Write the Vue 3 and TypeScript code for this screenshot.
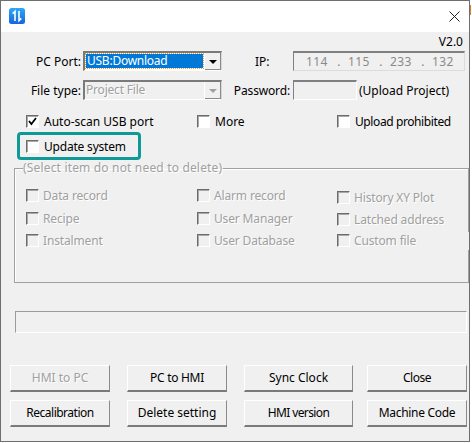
<script setup lang="ts">
const groupRows: { label: string }[][] = [
  [{ label: 'Data record' }, { label: 'Alarm record' }, { label: 'History XY Plot' }],
  [{ label: 'Recipe' }, { label: 'User Manager' }, { label: 'Latched address' }],
  [{ label: 'Instalment' }, { label: 'User Database' }, { label: 'Custom file' }],
]
const row1 = [
  { label: 'HMI to PC', disabled: true },
  { label: 'PC to HMI', disabled: false },
  { label: 'Sync Clock', disabled: false },
  { label: 'Close', disabled: false },
]
const row2 = ['Recalibration', 'Delete setting', 'HMI version', 'Machine Code']
const ipParts = ['114', '115', '233', '132']
</script>

<template>
  <div class="page">
    <div class="window">
      <header class="titlebar">
        <svg class="appicon" width="16" height="16" viewBox="0 0 16 16">
          <defs>
            <linearGradient id="g" x1="0" y1="0" x2="0" y2="1">
              <stop offset="0" stop-color="#2ea8f5" />
              <stop offset="1" stop-color="#1565e0" />
            </linearGradient>
          </defs>
          <rect width="16" height="16" rx="2.5" fill="url(#g)" />
          <path d="M6 13V3.4L3.7 5.6M10 3v9.6l2.3-2.2" fill="none" stroke="#fff" stroke-width="1.6" />
        </svg>
        <svg class="closeicon" width="11" height="11" viewBox="0 0 11 11">
          <path d="M.5.5l10 10M10.5.5l-10 10" stroke="#222" stroke-width="1" fill="none" />
        </svg>
      </header>

      <main class="body">
        <div class="version">V2.0</div>

        <div class="formrow r1">
          <label class="lbl">PC Port:</label>
          <div class="combo">
            <div class="combotext selected"><span>USB:Download</span></div>
            <div class="arrowbtn"><i class="tri"></i></div>
          </div>
          <label class="lbl2">IP:</label>
          <div class="sunken ip">
            <template v-for="(p, i) in ipParts" :key="p">
              <span class="ipnum">{{ p }}</span><span v-if="i < 3" class="ipdot">.</span>
            </template>
          </div>
        </div>

        <div class="formrow r2">
          <label class="lbl">File type:</label>
          <div class="combo off">
            <div class="combotext disabled tight">Project File</div>
            <div class="arrowbtn"><i class="tri gray"></i></div>
          </div>
          <label class="lbl3">Password:</label>
          <div class="sunken pw"></div>
          <span class="upl">(Upload Project)</span>
        </div>

        <div class="checks r3">
          <div class="chk c1">
            <span class="box">
              <svg width="9" height="9" viewBox="0 0 9 9"><path d="M1 4l2.4 3L8 1" fill="none" stroke="#000" stroke-width="1.8" /></svg>
            </span>Auto-scan USB port
          </div>
          <div class="chk c2"><span class="box"></span>More</div>
          <div class="chk c3"><span class="box"></span>Upload prohibited</div>
        </div>

        <div class="highlight">
          <div class="chk"><span class="box"></span>Update system</div>
        </div>

        <fieldset class="group">
          <legend class="disabled">(Select item do not need to delete)</legend>
          <div v-for="(r, ri) in groupRows" :key="ri" class="grow" :class="'g' + ri">
            <div
              v-for="(c, ci) in r"
              :key="c.label"
              class="chk disabled"
              :class="'c' + (ci + 1)"
            >
              <span class="box dis"></span>{{ c.label }}
            </div>
          </div>
          <i class="bordergap"></i>
        </fieldset>

        <div class="progress"></div>

        <div class="btnrow first">
          <button v-for="b in row1" :key="b.label" class="btn" :class="{ dim: b.disabled }">{{ b.label }}</button>
        </div>
        <div class="btnrow second">
          <button v-for="b in row2" :key="b" class="btn">{{ b }}</button>
        </div>
      </main>
    </div>
    <i class="edge-orange"></i>
  </div>
</template>

<style>
html, body { margin: 0; background: #fff; }
</style>

<style scoped>
.page { position: relative; width: 472px; height: 443px; overflow: hidden; }
.edge-orange { position: absolute; left: 470px; top: 5px; width: 1px; height: 10px; background: #d9822b; }
.window {
  width: 470px;
  height: 442px;
  box-sizing: border-box;
  border: 1px solid #6f6f6f;
  display: flex;
  flex-direction: column;
  font: 12px "Noto Sans", sans-serif;
  color: #000;
  background: #f0f0f0;
  overflow: hidden;
}
.titlebar {
  height: 30px;
  flex: none;
  background: #fff;
  display: flex;
  align-items: center;
  justify-content: space-between;
  padding: 0 9px 1px 8px;
}
.appicon { margin-top: -1px; }
.body { flex: 1; position: relative; }
.version { height: 18px; line-height: 18px; text-align: right; padding-right: 6px; margin-top: 1px; }
.formrow { display: flex; align-items: center; height: 20px; }
.r2 { margin-top: 9px; }
.lbl { width: 80px; text-align: right; margin-right: 2px; flex: none; }
.combo {
  width: 139px;
  height: 20px;
  flex: none;
  box-sizing: border-box;
  display: flex;
  border: 2px solid #7a7a7a;
  border-right: 1px solid #d8d8d8;
  border-bottom: 1px solid #fff;
  background: #fff;
}
.combo.off { background: #f0f0f0; }
.combotext { flex: 1; line-height: 16px; padding-left: 1px; overflow: hidden; }
.tight { letter-spacing: -.2px; }
.selected { background: #fff; padding: 1px; line-height: 14px; letter-spacing: -.25px; }
.selected span {
  display: block;
  height: 14px;
  background: #0078d7;
  color: #fff;
  outline: 1px dotted #e9a23b;
  padding-left: 1px;
}
.arrowbtn {
  width: 16px;
  flex: none;
  background: #f0f0f0;
  display: flex;
  align-items: center;
  justify-content: center;
  border-left: 1px solid #fff;
  box-shadow: inset -1px -1px 0 #8a8a8a;
}
.tri { width: 0; height: 0; border: 4px solid transparent; border-top: 4px solid #000; border-bottom: 0; }
.tri.gray { border-top-color: #a0a0a0; }
.lbl2 { margin-left: 33px; width: 38px; flex: none; }
.lbl3 { margin-left: 10px; width: 58px; flex: none; text-align: right; margin-right: 3px; white-space: nowrap; letter-spacing: -.15px; }
.sunken {
  box-sizing: border-box;
  height: 20px;
  border: 1px solid #fff;
  border-top: 2px solid #808080;
  border-left: 1px solid #808080;
  flex: none;
}
.ip {
  width: 172px;
  display: flex;
  align-items: center;
  color: #8a8a8a;
  padding-left: 12px;
  border-right-color: #dcdcdc;
  border-bottom-color: #dcdcdc;
  letter-spacing: .4px;
}
.ipnum { width: 24px; }
.ipdot { width: 18px; text-align: center; }
.pw { width: 64px; }
.upl { margin-left: 2px; white-space: nowrap; }
.checks { display: flex; height: 14px; margin-top: 14px; align-items: center; }
.chk { display: flex; align-items: center; white-space: nowrap; height: 14px; padding-left: 25px; }
.checks .c1 { width: 171px; box-sizing: border-box; flex: none; }
.checks .c2 { width: 140px; box-sizing: border-box; flex: none; }
.checks .c3 { letter-spacing: -.4px; }
.box {
  width: 13px;
  height: 13px;
  box-sizing: border-box;
  flex: none;
  margin-right: 5px;
  background: #fff;
  border: 1px solid #fff;
  border-top: 1px solid #6c6c6c;
  border-left: 1px solid #6c6c6c;
  box-shadow: inset 1px 1px 0 #a8a8a8;
  display: flex;
  align-items: center;
  justify-content: center;
}
.box.dis { background: #f0f0f0; margin-right: 4px; }
.highlight {
  width: 124px;
  height: 28px;
  box-sizing: border-box;
  margin: 4px 0 0 16px;
  border: 3px solid #0f9a98;
  border-radius: 4px;
  display: flex;
  align-items: center;
}
.highlight .chk { padding-left: 6px; letter-spacing: -.2px; }
.disabled { color: #a0a0a0; text-shadow: 1px 1px 0 #fff; }
.group {
  box-sizing: border-box;
  width: 455px;
  height: 122px;
  margin: 1px 0 0 13px;
  padding: 0;
  border: 1px solid #a0a0a0;
  box-shadow: inset 1px 1px 0 #fff;
  min-width: 0;
  position: relative;
}
legend { margin-left: 8px; padding: 0; line-height: 14px; letter-spacing: .17px; }
.grow { display: flex; height: 14px; letter-spacing: -.15px; }
.g0 { margin-top: 13px; }
.g1 { margin-top: 9px; }
.g2 { margin-top: 8px; }
.grow .chk { padding-left: 11px; box-sizing: border-box; flex: none; }
.grow .c1 { width: 171px; }
.grow .c2 { width: 140px; }
.g0 .c3 { position: relative; top: 2px; }
.g1 .c3 { position: relative; top: 1px; }
.bordergap {
  position: absolute;
  right: -1px;
  top: 57px;
  width: 1px;
  height: 18px;
  background: #f0f0f0;
}
.progress {
  width: 452px;
  height: 22px;
  box-sizing: border-box;
  margin: 28px 0 0 14px;
  border: 1px solid #fff;
  border-top-color: #9a9a9a;
  border-left-color: #9a9a9a;
}
.btnrow { display: flex; margin-left: 9px; }
.first { margin-top: 32px; }
.second { margin-top: 8px; }
.btn {
  width: 100px;
  height: 27px;
  flex: none;
  box-sizing: border-box;
  margin: 0 17px 0 0;
  padding: 0 0 1px;
  font: inherit;
  color: #000;
  background: #f0f0f0;
  border: 1px solid #fff;
  border-right-color: #8a8a8a;
  border-bottom: 2px solid #7a7a7a;
}
.btn:nth-child(3) { width: 109px; margin-right: 14px; }
.btn.dim { color: #a0a0a0; text-shadow: 1px 1px 0 #fff; }
.first .btn:nth-child(2) { letter-spacing: -.3px; }
.first .btn:nth-child(4) { letter-spacing: -.5px; }
.second .btn:nth-child(1) { letter-spacing: -.5px; }
.second .btn:nth-child(3) { letter-spacing: -.6px; }
.second .btn:nth-child(4) { letter-spacing: -.3px; }
</style>
